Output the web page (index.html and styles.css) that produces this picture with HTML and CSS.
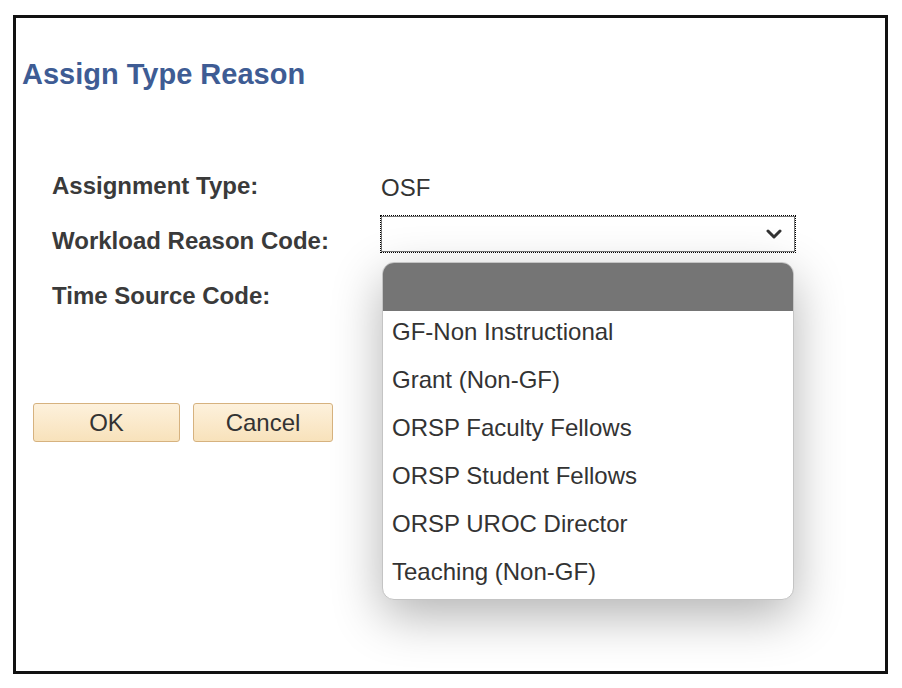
FILE: index.html
```html
<!DOCTYPE html>
<html lang="en">
<head>
    <meta charset="UTF-8">
    <meta name="viewport" content="width=device-width, initial-scale=1.0">
    <title>Assign Type Reason</title>
    <link rel="stylesheet" href="styles.css">
</head>
<body>
    <div class="dialog">
        <h1 class="dialog-title">Assign Type Reason</h1>

        <div class="fields">
            <div class="field-label">Assignment Type:</div>
            <div class="field-value">OSF</div>

            <div class="field-label">Workload Reason Code:</div>
            <div class="field-value">
                <div class="select-wrap">
                    <div class="select">
                        <svg class="select-arrow" width="16" height="10" viewBox="0 0 16 10">
                            <polyline points="2,2 8,8 14,2" fill="none" stroke="#333" stroke-width="3" stroke-linecap="round" stroke-linejoin="round"/>
                        </svg>
                    </div>
                    <ul class="select-list">
                        <li class="selected">&nbsp;</li>
                        <li>GF-Non Instructional</li>
                        <li>Grant (Non-GF)</li>
                        <li>ORSP Faculty Fellows</li>
                        <li>ORSP Student Fellows</li>
                        <li>ORSP UROC Director</li>
                        <li>Teaching (Non-GF)</li>
                    </ul>
                </div>
            </div>

            <div class="field-label">Time Source Code:</div>
            <div class="field-value"></div>
        </div>

        <div class="buttons">
            <button class="btn btn-ok">OK</button>
            <button class="btn btn-cancel">Cancel</button>
        </div>
    </div>
</body>
</html>
```

FILE: styles.css
```css
body {
    margin: 0;
    padding: 0;
    background: #fff;
    font-family: "Liberation Sans", Arial, sans-serif;
    color: #333;
}

.dialog {
    box-sizing: border-box;
    width: 875px;
    height: 659px;
    margin: 15px 0 0 13px;
    border: 3px solid #111;
    background: #fff;
}

.dialog-title {
    margin: 40px 0 0 6px;
    font-size: 29px;
    line-height: 33px;
    font-weight: bold;
    color: #3e5c94;
}

.fields {
    display: grid;
    grid-template-columns: 329px 414px;
    grid-auto-rows: 55px;
    margin: 67px 0 0 36px;
}

.field-label {
    padding-top: 14px;
    font-size: 24px;
    line-height: 28px;
    font-weight: bold;
    color: #3a3a3a;
}

.field-value {
    padding-top: 16px;
    font-size: 24px;
    line-height: 28px;
    color: #333;
}

.select-wrap {
    position: relative;
    margin-top: -13px;
}

.select {
    box-sizing: border-box;
    position: relative;
    width: 414px;
    height: 36px;
    border: 1px solid #767676;
    outline: 1px dotted #000;
    background: #fff;
}

.select-arrow {
    position: absolute;
    right: 12px;
    top: 12px;
}

/* open option list */
.select-list {
    position: absolute;
    left: 1px;
    top: 46px;
    z-index: 2;
    width: 412px;
    margin: 0;
    padding: 0;
    list-style: none;
    box-sizing: border-box;
    border: 1px solid #c4c4c4;
    border-radius: 12px;
    overflow: hidden;
    background: #fff;
    box-shadow: 0 16px 50px rgba(0, 0, 0, 0.3);
}

.select-list li {
    height: 48px;
    box-sizing: border-box;
    padding: 0 0 6px 9px;
    font-size: 24px;
    line-height: 42px;
    color: #333;
}

.select-list li.selected {
    background: #757575;
}

.buttons {
    display: flex;
    gap: 13px;
    margin: 80px 0 0 17px;
}

.btn {
    height: 39px;
    padding: 0;
    font-family: "Liberation Sans", Arial, sans-serif;
    font-size: 24px;
    color: #333;
    background: linear-gradient(#fdf1dc, #f8e2bb);
    border: 1px solid #d6b27f;
    border-radius: 3px;
}

.btn-ok {
    width: 147px;
}

.btn-cancel {
    width: 140px;
}
```
